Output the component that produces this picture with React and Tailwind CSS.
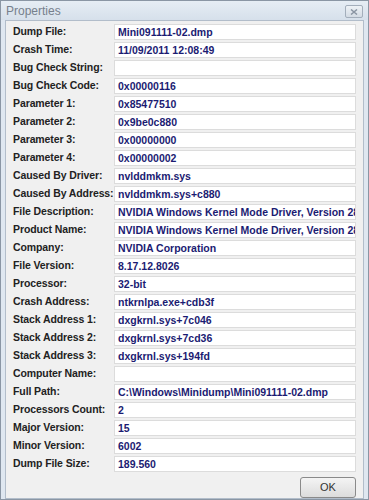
const rows = [
  ["Dump File:", "Mini091111-02.dmp"],
  ["Crash Time:", "11/09/2011 12:08:49"],
  ["Bug Check String:", ""],
  ["Bug Check Code:", "0x00000116"],
  ["Parameter 1:", "0x85477510"],
  ["Parameter 2:", "0x9be0c880"],
  ["Parameter 3:", "0x00000000"],
  ["Parameter 4:", "0x00000002"],
  ["Caused By Driver:", "nvlddmkm.sys"],
  ["Caused By Address:", "nvlddmkm.sys+c880"],
  ["File Description:", "NVIDIA Windows Kernel Mode Driver, Version 280.26"],
  ["Product Name:", "NVIDIA Windows Kernel Mode Driver, Version 280.26"],
  ["Company:", "NVIDIA Corporation"],
  ["File Version:", "8.17.12.8026"],
  ["Processor:", "32-bit"],
  ["Crash Address:", "ntkrnlpa.exe+cdb3f"],
  ["Stack Address 1:", "dxgkrnl.sys+7c046"],
  ["Stack Address 2:", "dxgkrnl.sys+7cd36"],
  ["Stack Address 3:", "dxgkrnl.sys+194fd"],
  ["Computer Name:", ""],
  ["Full Path:", "C:\\Windows\\Minidump\\Mini091111-02.dmp"],
  ["Processors Count:", "2"],
  ["Major Version:", "15"],
  ["Minor Version:", "6002"],
  ["Dump File Size:", "189.560"],
];

export default function App() {
  return (
    <div className="w-[369px] h-[500px] overflow-hidden border border-[#8a96a4] bg-[#dfe7f0] flex flex-col [font-family:'Liberation_Sans',Arial,sans-serif]">
      {/* title bar */}
      <div className="h-[19px] shrink-0 flex items-center justify-between pl-[5px] pr-[5px] bg-gradient-to-b from-[#e6edf4] to-[#d6e0eb]">
        <span className="text-[12px] text-[#76808c] leading-none mt-[1px]">Properties</span>
        <div className="w-[18px] h-[13px] mt-[2px] border border-[#a3aebb] rounded-[2px] bg-gradient-to-b from-[#eef2f6] to-[#d3dbe4] flex items-center justify-center">
          <svg width="8" height="6" viewBox="0 0 8 6">
            <path d="M1 0.5 L7 5.5 M7 0.5 L1 5.5" stroke="#8a95a3" strokeWidth="1.5" />
          </svg>
        </div>
      </div>
      {/* body */}
      <div className="flex-1 mx-[4px] mb-[3px] border border-[#b2bdca] bg-[#f0f0f0] flex flex-col pt-[2px]">
        <div className="flex flex-col pl-[7px] pr-[7px]">
          {rows.map(([label, value]) => (
            <div key={label} className="h-[18px] flex items-center">
              <span className="w-[101px] shrink-0 text-[10.5px] font-bold text-[#222] whitespace-nowrap tracking-[-0.1px]">{label}</span>
              <div className="flex-1 min-w-0 h-[16px] bg-white border border-[#dcdcdc] overflow-hidden flex items-center pl-[3px]">
                <span className="text-[10.5px] font-bold text-[#1b1b72] whitespace-nowrap leading-none">{value}</span>
              </div>
            </div>
          ))}
        </div>
        <div className="flex justify-end pr-[7px] mt-[4px]">
          <button className="w-[56px] h-[21px] border border-[#8a8a8a] rounded-[3px] bg-gradient-to-b from-[#f4f4f4] to-[#dcdcdc] text-[11px] text-[#333]">
            OK
          </button>
        </div>
      </div>
    </div>
  );
}
